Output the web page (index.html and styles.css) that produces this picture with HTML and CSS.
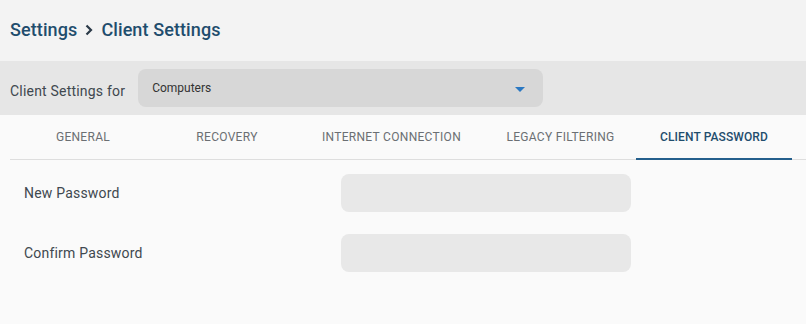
FILE: index.html
```html
<!DOCTYPE html>
<html lang="en">
<head>
  <meta charset="utf-8">
  <meta name="viewport" content="width=device-width, initial-scale=1">
  <title>Client Settings</title>
  <link rel="stylesheet" href="styles.css">
</head>
<body>
  <header class="header">
    <h1 class="breadcrumb">
      <span>Settings</span>
      <svg class="crumb-sep" width="8" height="12" viewBox="0 0 8 12"><path d="M1.5 1.5 L6 6 L1.5 10.5" fill="none" stroke="#2b3a48" stroke-width="2.2"/></svg>
      <span>Client Settings</span>
    </h1>
  </header>

  <div class="target-bar">
    <label class="target-label" for="target">Client Settings for</label>
    <div class="select" id="target">
      <span>Computers</span>
      <span class="select-arrow"></span>
    </div>
  </div>

  <main class="main-content">
    <nav class="tabs">
      <div class="tab">General</div>
      <div class="tab">Recovery</div>
      <div class="tab">Internet Connection</div>
      <div class="tab">Legacy Filtering</div>
      <div class="tab active">Client Password</div>
    </nav>

    <form class="password-form">
      <div class="form-row">
        <label for="newPassword">New Password</label>
        <input type="password" id="newPassword">
      </div>
      <div class="form-row">
        <label for="confirmPassword">Confirm Password</label>
        <input type="password" id="confirmPassword">
      </div>
    </form>
  </main>
</body>
</html>
```

FILE: styles.css
```css
:root {
  --primary-color: #1f4d6d;
  --accent-color: #2a78c2;
  --text-color: #40484f;
  --tab-color: #6b6f73;
  --header-bg: #f3f3f3;
  --bar-bg: #e6e6e6;
  --page-bg: #fafafa;
  --select-bg: #d7d7d7;
  --input-bg: #e8e8e8;
  --border-color: #dedede;
}

* {
  margin: 0;
  padding: 0;
  box-sizing: border-box;
}

body {
  font-family: Roboto, 'Liberation Sans', sans-serif;
  background-color: var(--page-bg);
  width: 806px;
  height: 324px;
  overflow: hidden;
}

.header {
  background-color: var(--header-bg);
  height: 61px;
  padding: 0 10px;
  display: flex;
  align-items: center;
}

.breadcrumb {
  display: flex;
  align-items: center;
  gap: 8px;
  font-size: 18px;
  font-weight: 500;
  letter-spacing: 0.1px;
  color: var(--primary-color);
  margin-top: -3px;
}

.crumb-sep {
  margin-top: 2px;
}

.target-bar {
  background-color: var(--bar-bg);
  height: 54px;
  padding: 0 10px;
  display: flex;
  align-items: center;
  gap: 13px;
}

.target-label {
  font-size: 14px;
  letter-spacing: 0.2px;
  color: var(--text-color);
  margin-top: 6px;
}

.select {
  width: 405px;
  height: 38px;
  background-color: var(--select-bg);
  border-radius: 8px;
  padding: 0 14px;
  display: flex;
  align-items: center;
  justify-content: space-between;
  font-size: 12px;
  color: #333;
}

.select span:first-child {
  margin-top: -1px;
}

.select-arrow {
  width: 0;
  height: 0;
  border-left: 5px solid transparent;
  border-right: 5px solid transparent;
  border-top: 5px solid var(--accent-color);
  margin-right: 4px;
  margin-top: 2px;
}

.main-content {
  background-color: var(--page-bg);
}

.tabs {
  display: grid;
  grid-template-columns: 146px 142px 187px 151px 156px;
  margin-left: 10px;
  height: 45px;
  border-bottom: 1px solid var(--border-color);
}

.tab {
  display: flex;
  align-items: center;
  justify-content: center;
  font-size: 12px;
  letter-spacing: 0.3px;
  text-transform: uppercase;
  color: var(--tab-color);
  padding-top: 1px;
  border-bottom: 2px solid transparent;
}

.tab.active {
  color: var(--primary-color);
  font-weight: 500;
  letter-spacing: 0.1px;
  border-bottom-color: #245f8c;
  margin-bottom: -1px;
}

.password-form {
  padding: 14px 0 0 24px;
  display: flex;
  flex-direction: column;
  gap: 22px;
}

.form-row {
  display: flex;
  align-items: center;
}

.form-row label {
  width: 317px;
  font-size: 14px;
  letter-spacing: 0.2px;
  color: var(--text-color);
}

.form-row input {
  width: 290px;
  height: 38px;
  border: none;
  border-radius: 8px;
  background-color: var(--input-bg);
  outline: none;
}
```
